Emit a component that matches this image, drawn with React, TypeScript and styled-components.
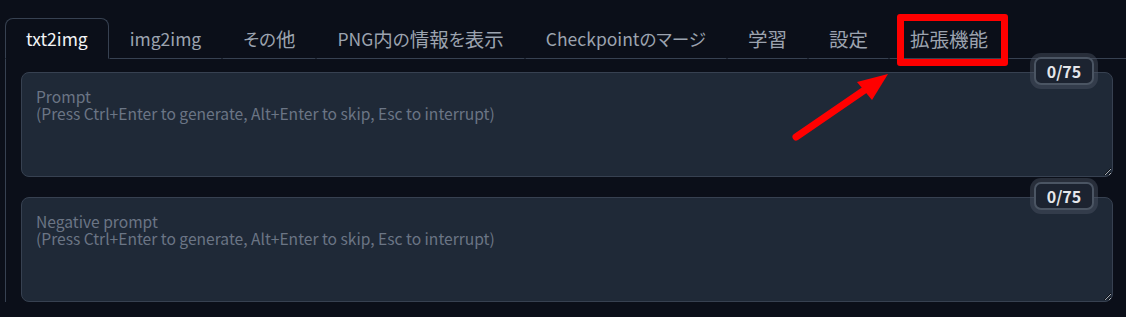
import React from "react";
import styled, { createGlobalStyle } from "styled-components";

const Global = createGlobalStyle`
  html, body { margin: 0; padding: 0; background: #0b0f19; color-scheme: dark; }
  body { font-family: "Noto Sans CJK JP", "Noto Sans", sans-serif; }
`;

const Page = styled.div`
  position: relative;
  width: 1126px;
  height: 317px;
  overflow: hidden;
  background: #0b0f19;
  padding: 18px 0 0 5px;
  box-sizing: border-box;
`;

const TabBar = styled.div`
  display: flex;
  align-items: flex-end;
  height: 41px;
`;

const Tab = styled.div<{ $active?: boolean }>`
  height: 41px;
  box-sizing: border-box;
  display: flex;
  align-items: center;
  padding: 0 20px 1px 20px;
  font-size: 17.5px;
  font-feature-settings: "palt" 1;
  color: ${(p) => (p.$active ? "#f3f4f6" : "#9ca3af")};
  white-space: nowrap;
  border: 1px solid ${(p) => (p.$active ? "#374151" : "transparent")};
  border-bottom: 1px solid ${(p) => (p.$active ? "transparent" : "#374151")};
  border-radius: ${(p) => (p.$active ? "8px 8px 0 0" : "0")};
`;

const Kanji = styled.span`
  font-size: 19.5px;
`;

const Filler = styled.div`
  flex: 1;
  height: 41px;
  border-bottom: 1px solid #374151;
`;

const Panel = styled.div`
  border-left: 1px solid #374151;
  padding: 13px 13px 0 15px;
  display: flex;
  flex-direction: column;
  gap: 20px;
`;

const Field = styled.div`
  position: relative;
`;

const Area = styled.textarea`
  display: block;
  width: 100%;
  height: 105px;
  box-sizing: border-box;
  background: #1f2937;
  border: 1px solid #374151;
  border-radius: 8px;
  padding: 15px 14px;
  font-family: "Noto Sans CJK JP", "Noto Sans", sans-serif;
  font-size: 15.6px;
  line-height: 17px;
  color: #e5e7eb;
  resize: vertical;
  outline: none;
  &::placeholder { color: #6b7585; }
`;

const Counter = styled.div`
  position: absolute;
  right: 19px;
  top: -15px;
  height: 28px;
  width: 60px;
  box-sizing: border-box;
  display: flex;
  align-items: center;
  justify-content: center;
  background: #1c2330;
  border: 2px solid #4b5563;
  border-radius: 7px;
  box-shadow: 0 0 0 4px rgba(75, 85, 99, 0.45);
  font-size: 16px;
  font-weight: 700;
  color: #e5e7eb;
`;

const Highlight = styled.div`
  position: absolute;
  left: 897px;
  top: 14px;
  width: 111px;
  height: 52px;
  box-sizing: border-box;
  border: 7px solid #ff0000;
  border-radius: 3px;
  pointer-events: none;
`;

const Arrow = styled.svg`
  position: absolute;
  left: 0;
  top: 0;
  pointer-events: none;
`;

const tabs = [
  "txt2img",
  "img2img",
  "その他",
  "PNG内の情報を表示",
  "Checkpointのマージ",
  "学習",
  "設定",
  "拡張機能",
];

const placeholderTail = "(Press Ctrl+Enter to generate, Alt+Enter to skip, Esc to interrupt)";

const KANJI_RUN = /([\u4e00-\u9fff]+)/;

function Label({ text }: { text: string }) {
  const parts = text.split(KANJI_RUN).filter(Boolean);
  return (
    <>
      {parts.map((p, i) =>
        KANJI_RUN.test(p) ? <Kanji key={i}>{p}</Kanji> : <span key={i}>{p}</span>
      )}
    </>
  );
}

export default function App() {
  return (
    <>
      <Global />
      <Page>
        <TabBar>
          {tabs.map((t, i) => (
            <Tab key={t} $active={i === 0}>
              <Label text={t} />
            </Tab>
          ))}
          <Filler />
        </TabBar>
        <Panel>
          <Field>
            <Counter>0/75</Counter>
            <Area placeholder={"Prompt\n" + placeholderTail} />
          </Field>
          <Field>
            <Counter>0/75</Counter>
            <Area placeholder={"Negative prompt\n" + placeholderTail} />
          </Field>
        </Panel>
        <Highlight />
        <Arrow width="1126" height="317" viewBox="0 0 1126 317">
          <line x1="796" y1="137" x2="866" y2="89" stroke="#ff0000" strokeWidth="7" strokeLinecap="round" />
          <polygon points="888,74 857,82 872,100" fill="#ff0000" />
        </Arrow>
      </Page>
    </>
  );
}
